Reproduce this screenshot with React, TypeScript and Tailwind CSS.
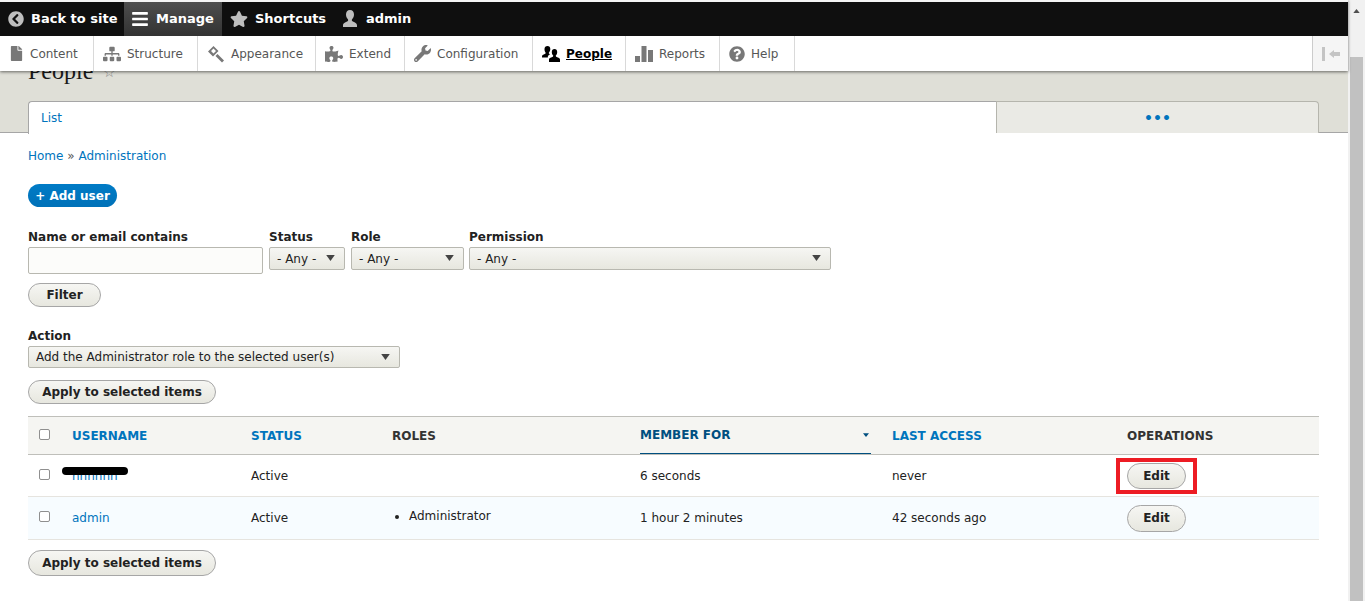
import type { ReactNode } from 'react'
import { FaBars, FaChevronCircleLeft, FaFile, FaPuzzlePiece, FaQuestionCircle, FaSitemap, FaStar, FaWrench } from 'react-icons/fa'

function UserIcon({ className }: { className?: string }) {
  return (
    <svg viewBox="0 0 18 18" className={className} fill="currentColor">
      <path d="M9 0c2.6 0 4 2 4 4.600 0 2-.8 3.700-1.900 4.700-.4.400-.4 1.600.3 2 1.600.9 4.600 1.500 4.600 4.200V17H2v-1.500c0-2.700 3-3.300 4.600-4.200.7-.4.700-1.600.3-2C5.800 8.300 5 6.600 5 4.600 5 2 6.400 0 9 0z" />
    </svg>
  )
}

function AppearanceIcon({ className }: { className?: string }) {
  return (
    <svg viewBox="0 0 18 18" className={className} fill="currentColor">
      <path d="M6.500 1 1 6.500l5 5L11.500 6zM6.500 3.500 9 6l-2.500 2.500L4 6z" fillRule="evenodd" />
      <path d="m10.500 9 6.500 6.500-2 2L8.500 11z" />
    </svg>
  )
}

function PeopleIcon({ className }: { className?: string }) {
  return (
    <svg viewBox="0 0 18 18" className={className} fill="currentColor">
      <path d="M5.500 1c1.800 0 2.800 1.300 2.800 3 0 1.500-.6 2.700-1.300 3.400-.3.300-.2 1.100.2 1.400l1 .5c-1.600.7-2.400 1.500-2.400 3.200H0v-1c0-1.800 2.100-2.100 3.200-2.700.5-.3.600-1.100.3-1.400C2.800 6.700 2.500 5.500 2.500 4c0-1.700 1.200-3 3-3z" />
      <path d="M12.500 4c1.700 0 2.700 1.300 2.700 3 0 1.500-.5 2.600-1.200 3.300-.3.300-.3 1.100.2 1.400 1.100.6 3.800 1 3.800 2.800V17H7v-2.500c0-1.800 2.700-2.200 3.800-2.800.5-.3.500-1.100.2-1.400-.7-.7-1.200-1.800-1.200-3.300 0-1.700 1-3 2.700-3z" />
    </svg>
  )
}

function ReportsIcon({ className }: { className?: string }) {
  return (
    <svg viewBox="0 0 18 18" className={className} fill="currentColor">
      <path d="M0 11h5v6H0zM6.500 1h5v16h-5zM13 5h5v12h-5z" />
    </svg>
  )
}

function Caret() {
  return (
    <svg viewBox="0 0 10 7" className="pointer-events-none absolute right-[10px] top-[8px] h-[6px] w-[9px] text-[#444]" fill="currentColor">
      <path d="M0 0h10L5 7z" />
    </svg>
  )
}

function TopItem({ icon, label, className }: { icon: ReactNode; label: string; className: string }) {
  return (
    <div className={`flex h-full items-center gap-[7px] text-[13px] font-bold text-white ${className}`}>
      <span className="text-[#bebebe]">{icon}</span>
      {label}
    </div>
  )
}

function NavItem({ icon, label, width, active }: { icon: ReactNode; label: string; width: string; active?: boolean }) {
  return (
    <div className={`flex h-full items-center gap-[6px] border-r border-[#d9d9d9] pl-[9px] text-[12px] ${width} ${active ? 'font-bold text-black underline' : 'text-[#565656]'}`}>
      <span className={active ? 'text-black' : 'text-[#787878]'}>{icon}</span>
      {label}
    </div>
  )
}

function Select({ label, value, width }: { label: string; value: string; width: string }) {
  return (
    <div className={width}>
      <div className="h-[17px] text-[12px] font-bold leading-[14px] text-[#222]">{label}</div>
      <div className="relative">
        <select className="h-[23px] w-full appearance-none rounded-[2px] border border-[#b8b8b0] bg-gradient-to-b from-[#f6f6f3] to-[#e7e7df] pl-[7px] text-[12px] text-[#222]">
          <option>{value}</option>
        </select>
        <Caret />
      </div>
    </div>
  )
}

function PillButton({ label, className }: { label: string; className: string }) {
  return (
    <button type="button" className={`rounded-full border border-[#a6a6a6] bg-gradient-to-b from-[#f6f6f3] to-[#e7e7df] text-[12px] font-bold text-[#222] ${className}`}>
      {label}
    </button>
  )
}

function Checkbox() {
  return <input type="checkbox" className="h-[11px] w-[11px] appearance-none rounded-[2px] border border-[#8f8f8f] bg-white" />
}

export default function App() {
  return (
    <div className="flex h-[601px] w-[1365px] overflow-hidden bg-white font-['DejaVu_Sans',sans-serif] text-[12px] text-[#222]">
      <div className="flex w-[1348px] flex-col">
        <div className="relative z-10 flex-none border-t-2 border-[#f4f4f4] shadow-[0_1px_3px_rgba(0,0,0,0.55)]">
          <div className="flex h-[34px] items-center bg-[#0f0f0f]">
            <TopItem className="w-[124px] pl-[8px]" icon={<FaChevronCircleLeft className="h-[16px] w-[16px]" />} label="Back to site" />
            <div className="flex h-full w-[98px] items-center gap-[7px] bg-gradient-to-b from-[#4e4e4e] to-[#333] pl-[7px] text-[13px] font-bold text-white">
              <FaBars className="h-[18px] w-[18px]" />
              Manage
            </div>
            <TopItem className="w-[119px] pl-[8px]" icon={<FaStar className="h-[18px] w-[18px]" />} label="Shortcuts" />
            <TopItem className="pl-0" icon={<UserIcon className="h-[18px] w-[18px]" />} label="admin" />
          </div>
          <div className="flex h-[35px] items-center bg-white">
            <NavItem width="w-[94px]" icon={<FaFile className="h-[15px] w-[15px]" />} label="Content" />
            <NavItem width="w-[104px]" icon={<FaSitemap className="h-[18px] w-[18px]" />} label="Structure" />
            <NavItem width="w-[118px]" icon={<AppearanceIcon className="h-[18px] w-[18px]" />} label="Appearance" />
            <NavItem width="w-[89px]" icon={<FaPuzzlePiece className="h-[18px] w-[18px]" />} label="Extend" />
            <NavItem width="w-[128px]" icon={<FaWrench className="h-[17px] w-[17px]" />} label="Configuration" />
            <NavItem width="w-[93px]" active icon={<PeopleIcon className="h-[18px] w-[18px]" />} label="People" />
            <NavItem width="w-[94px]" icon={<ReportsIcon className="h-[18px] w-[18px]" />} label="Reports" />
            <NavItem width="w-[75px]" icon={<FaQuestionCircle className="h-[16px] w-[16px]" />} label="Help" />
            <div className="ml-auto flex h-full w-[36px] items-center justify-center border-l border-[#ccc] bg-[#f5f5f5]">
              <svg viewBox="0 0 18 14" className="h-[14px] w-[18px] text-[#c4c4c4]" fill="currentColor">
                <path d="M0 0h3v14H0zM7 7l5-4v2h6v4h-6v2z" />
              </svg>
            </div>
          </div>
        </div>

        <div className="flex-none border-b border-[#a6a6a6] bg-[#dfdfd7] pl-[28px] pr-[29px]">
          <div className="-mt-[13px] flex h-[43px] items-start gap-[10px] pt-[0px] font-['Liberation_Serif',serif] text-[24px] leading-[27px] text-[#1a1a1a]">
            People
            <span className="text-[14px] leading-[30px] text-[#888]">☆</span>
          </div>
          <div className="-mb-px flex h-[32px]">
            <div className="flex h-[33px] w-[968px] items-center rounded-tl-[4px] border-l border-t border-[#a6a6a6] bg-white pl-[12px] text-[#0074bd]">List</div>
            <div className="flex h-[32px] flex-1 items-center justify-center rounded-tr-[4px] border-l border-r border-t border-[#b5b5ad] bg-[#eaeae5] text-[14px] font-bold leading-none text-[#0074bd]">•••</div>
          </div>
        </div>

        <div className="pl-[28px] pr-[29px]">
          <div className="mt-[16px] h-[15px] leading-[15px] text-[#0074bd]">
            Home <span className="text-[#555]">»</span> Administration
          </div>

          <button type="button" className="mt-[20px] block h-[23px] w-[89px] rounded-full bg-gradient-to-b from-[#007bc6] to-[#0071b8] text-[12px] font-bold text-white">
            + Add user
          </button>

          <div className="mt-[23px] flex gap-[6px]">
            <div className="w-[235px]">
              <div className="h-[17px] text-[12px] font-bold leading-[14px] text-[#222]">Name or email contains</div>
              <input className="h-[27px] w-full rounded-[2px] border border-[#b8b8b0] bg-[#fcfcfa]" />
            </div>
            <Select label="Status" value="- Any -" width="w-[76px]" />
            <Select label="Role" value="- Any -" width="w-[113px]" />
            <div className="-ml-[1px]">
              <Select label="Permission" value="- Any -" width="w-[362px]" />
            </div>
          </div>

          <PillButton label="Filter" className="mt-[9px] block h-[24px] w-[73px]" />

          <div className="mt-[22px] h-[17px] text-[12px] font-bold leading-[14px] text-[#222]">Action</div>
          <div className="relative w-[372px]">
            <select className="h-[22px] w-full appearance-none rounded-[2px] border border-[#b8b8b0] bg-gradient-to-b from-[#f6f6f3] to-[#e7e7df] pl-[7px] text-[12px] text-[#222]">
              <option>Add the Administrator role to the selected user(s)</option>
            </select>
            <Caret />
          </div>

          <PillButton label="Apply to selected items" className="mt-[12px] block h-[24px] w-[188px]" />

          <table className="mt-[12px] w-[1291px] table-fixed border-collapse">
            <colgroup>
              <col className="w-[32px]" />
              <col className="w-[179px]" />
              <col className="w-[141px]" />
              <col className="w-[248px]" />
              <col className="w-[252px]" />
              <col className="w-[235px]" />
              <col className="w-[204px]" />
            </colgroup>
            <thead>
              <tr className="h-[38px] border-y border-[#bfbfba] bg-[#f5f5f2] text-left text-[12px] font-bold">
                <th className="pl-[11px] font-normal"><Checkbox /></th>
                <th className="pl-[12px] font-bold text-[#0074bd]">USERNAME</th>
                <th className="pl-[12px] font-bold text-[#0074bd]">STATUS</th>
                <th className="pl-[12px] font-bold text-[#333]">ROLES</th>
                <th className="p-0 pl-[12px] pr-[9px] font-bold text-[#004f80]">
                  <div className="relative flex h-[37px] items-center border-b border-[#004f80]">
                    MEMBER FOR
                    <svg viewBox="0 0 8 5" className="absolute right-[2px] top-[16px] h-[4px] w-[6px]" fill="currentColor"><path d="M0 0h8L4 5z" /></svg>
                  </div>
                </th>
                <th className="pl-[12px] font-bold text-[#0074bd]">LAST ACCESS</th>
                <th className="pl-[12px] font-bold text-[#333]">OPERATIONS</th>
              </tr>
            </thead>
            <tbody>
              <tr className="h-[42px] border-b border-[#e6e4df]">
                <td className="pl-[11px]"><Checkbox /></td>
                <td className="pl-[12px] text-[#0074bd]">
                  <span className="relative inline-block">
                    nnnnnn
                    <span className="absolute -left-[10px] top-[0px] h-[8px] w-[66px] rounded-full bg-black" />
                  </span>
                </td>
                <td className="pl-[12px]">Active</td>
                <td />
                <td className="pl-[12px]">6 seconds</td>
                <td className="pl-[12px]">never</td>
                <td className="pl-[12px]">
                  <span className="relative inline-block align-middle">
                    <PillButton label="Edit" className="block h-[26px] w-[59px]" />
                    <span className="absolute -inset-x-[11px] -inset-y-[5px] border-[4px] border-[#ed1c24]" />
                  </span>
                </td>
              </tr>
              <tr className="h-[43px] border-b border-[#e6e4df] bg-[#f7fcff]">
                <td className="pl-[11px]"><Checkbox /></td>
                <td className="pl-[12px] text-[#0074bd]">admin</td>
                <td className="pl-[12px]">Active</td>
                <td className="pl-[12px]">
                  <ul className="-mt-[4px] list-disc pl-[17px]">
                    <li>Administrator</li>
                  </ul>
                </td>
                <td className="pl-[12px]">1 hour 2 minutes</td>
                <td className="pl-[12px]">42 seconds ago</td>
                <td className="pl-[12px]">
                  <PillButton label="Edit" className="block h-[27px] w-[59px]" />
                </td>
              </tr>
            </tbody>
          </table>

          <PillButton label="Apply to selected items" className="mt-[10px] block h-[26px] w-[188px]" />
        </div>
      </div>

      <div className="flex w-[17px] flex-none flex-col items-center bg-[#f1f1f1]">
        <svg viewBox="0 0 8 5" className="mt-[9px] h-[4px] w-[7px] text-[#505050]" fill="currentColor"><path d="M0 5h8L4 0z" /></svg>
        <div className="mt-[44px] w-[13px] flex-1 bg-[#c1c1c1]" />
      </div>
    </div>
  )
}
